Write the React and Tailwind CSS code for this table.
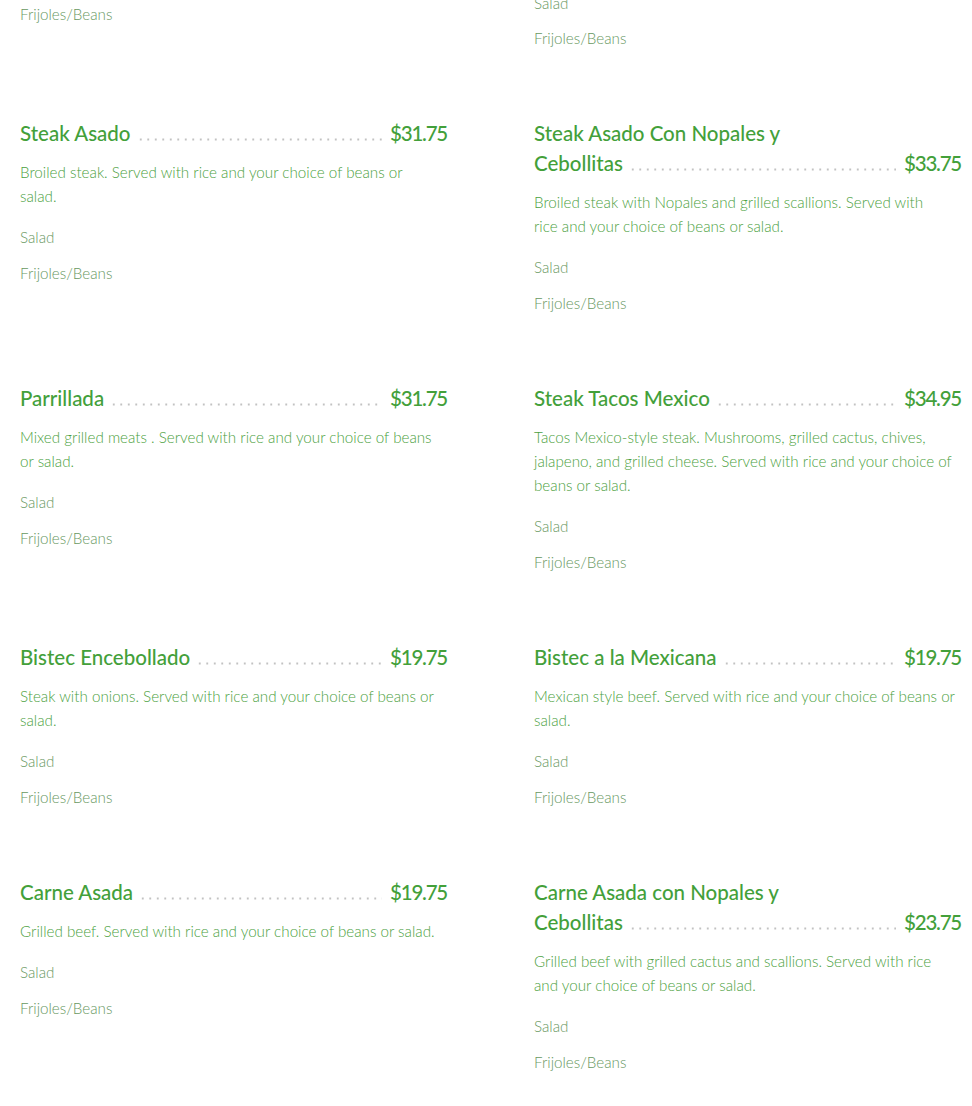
const TITLE = 'text-[#43a03a]'
const DESC = 'text-[#4c9f41]'
const OPT = 'text-[#68985f]'

const items = [
  {
    name: ['Steak Asado'],
    price: '$31.75',
    desc: ['Broiled steak. Served with rice and your choice of beans or', 'salad.']
  },
  {
    name: ['Steak Asado Con Nopales y', 'Cebollitas'],
    price: '$33.75',
    desc: ['Broiled steak with Nopales and grilled scallions. Served with', 'rice and your choice of beans or salad.']
  },
  {
    name: ['Parrillada'],
    price: '$31.75',
    desc: ['Mixed grilled meats . Served with rice and your choice of beans', 'or salad.']
  },
  {
    name: ['Steak Tacos Mexico'],
    price: '$34.95',
    desc: [
      'Tacos Mexico-style steak. Mushrooms, grilled cactus, chives,',
      'jalapeno, and grilled cheese. Served with rice and your choice of',
      'beans or salad.'
    ]
  },
  {
    name: ['Bistec Encebollado'],
    price: '$19.75',
    desc: ['Steak with onions. Served with rice and your choice of beans or', 'salad.']
  },
  {
    name: ['Bistec a la Mexicana'],
    price: '$19.75',
    desc: ['Mexican style beef. Served with rice and your choice of beans or', 'salad.']
  },
  {
    name: ['Carne Asada'],
    price: '$19.75',
    desc: ['Grilled beef. Served with rice and your choice of beans or salad.']
  },
  {
    name: ['Carne Asada con Nopales y', 'Cebollitas'],
    price: '$23.75',
    desc: ['Grilled beef with grilled cactus and scallions. Served with rice', 'and your choice of beans or salad.']
  }
]

function Options() {
  return (
    <div className={`mt-[17px] flex flex-col gap-3 text-[15.2px] leading-6 font-light ${OPT}`}>
      <div>Salad</div>
      <div>Frijoles/Beans</div>
    </div>
  )
}

function MenuItem({ item }) {
  const lines = item.name
  const last = lines[lines.length - 1]
  return (
    <div>
      <h3 className={`text-[20.5px] leading-[30px] font-medium ${TITLE}`}>
        {lines.slice(0, -1).map((l) => (
          <div key={l}>{l}</div>
        ))}
        <div className="flex items-baseline">
          <span className="whitespace-nowrap">{last}</span>
          {/* dot leader */}
          <span className="ml-[6px] mr-[8px] h-[3px] flex-1 bg-[radial-gradient(circle,#c2c2c2_0.9px,transparent_1.3px)] bg-[length:7.5px_3px] bg-repeat-x" />
          <span className="whitespace-nowrap tracking-[-0.06em]">{item.price}</span>
        </div>
      </h3>
      <p className={`mt-[12px] text-[15.2px] leading-6 font-light ${DESC}`}>
        {item.desc.map((l) => (
          <span key={l} className="block whitespace-nowrap">
            {l}
          </span>
        ))}
      </p>
      <Options />
    </div>
  )
}

export default function App() {
  return (
    <div
      className="min-h-[1106px] overflow-hidden bg-white px-5"
      style={{ fontFamily: 'Lato, "Noto Sans", sans-serif' }}
    >
      <div className="-mt-[9px] grid grid-cols-[427px_427px] gap-x-[87px] gap-y-[68px] items-start">
        <div className={`pt-[11px] text-[15.2px] leading-6 font-light ${OPT}`}>Frijoles/Beans</div>
        <div className={`flex flex-col gap-[11px] text-[15.2px] leading-6 font-light ${OPT}`}>
          <div>Salad</div>
          <div>Frijoles/Beans</div>
        </div>
        {items.map((item) => (
          <MenuItem key={item.name.join(' ')} item={item} />
        ))}
      </div>
    </div>
  )
}
